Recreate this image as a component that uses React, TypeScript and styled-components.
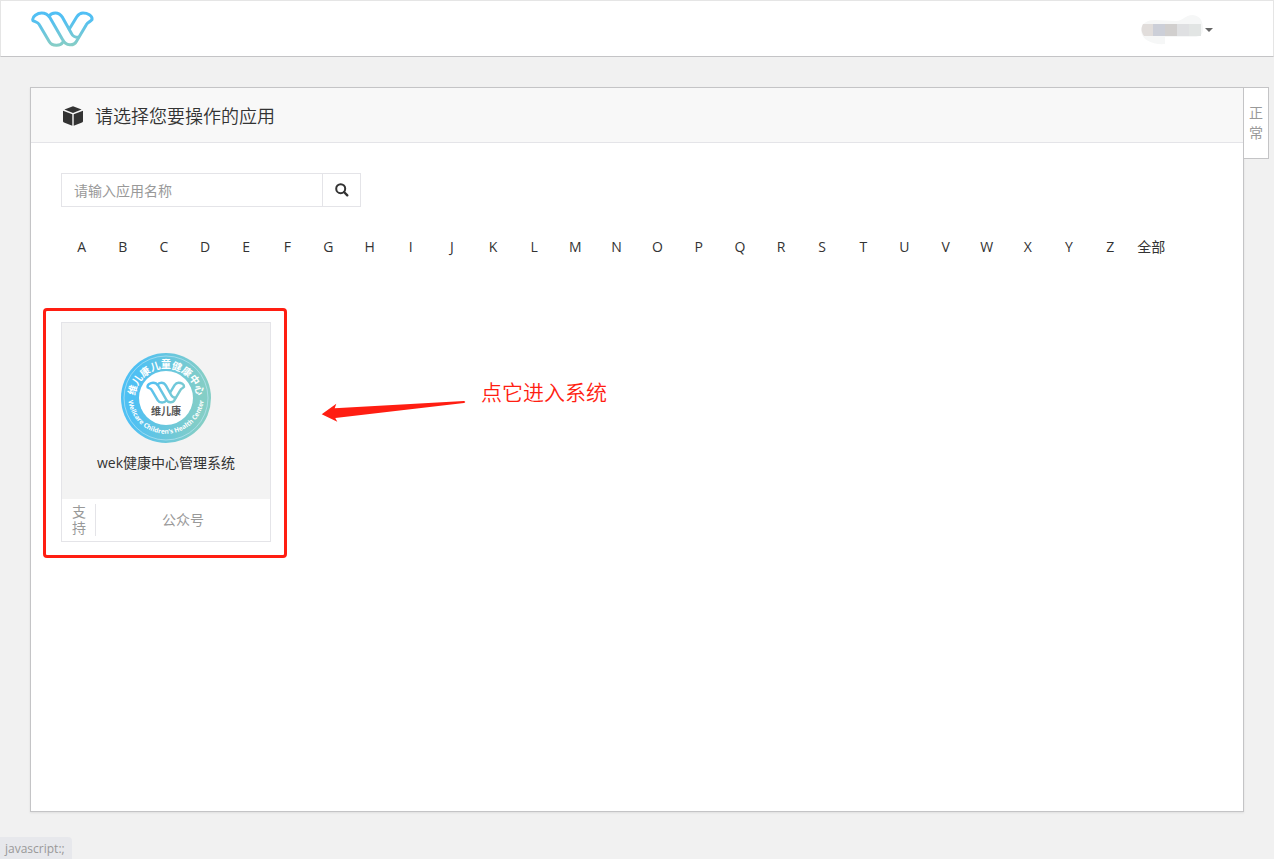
import React from "react";
import styled, { createGlobalStyle } from "styled-components";

const line = "#e4e4e8";
const edge = "#c4c4c6";
const ink = "#333";
const muted = "#999";
const alert = "#ff1e12";

const GlobalStyle = createGlobalStyle`
  *, *::before, *::after { box-sizing: border-box; }
  body {
    margin: 0;
    background: #f1f1f1;
    color: ${ink};
    font-family: "Open Sans", "Noto Sans CJK SC", sans-serif;
    font-size: 14px;
    line-height: 20px;
  }
  button, input { font: inherit; color: inherit; }
  a { color: inherit; text-decoration: none; }
`;

const Page = styled.div`
  display: flex;
  flex-direction: column;
  min-height: 100vh;
`;

const TopBar = styled.header`
  display: flex;
  align-items: center;
  justify-content: space-between;
  height: 57px;
  padding: 2px 60px 0 30px;
  background: #fff;
  border: 1px solid #e5e5e5;
  border-bottom-color: ${edge};
`;

const LogoLink = styled.a`
  display: flex;
`;

const UserButton = styled.button`
  display: flex;
  align-items: center;
  gap: 2px;
  padding: 0;
  border: 0;
  background: none;
  cursor: pointer;
`;

const Caret = styled.span`
  border: 4px solid transparent;
  border-top-color: #666;
  border-bottom: 0;
`;

const Main = styled.main`
  display: flex;
  flex: 1;
  align-items: stretch;
  padding: 30px 5px 47px 30px;
`;

const Panel = styled.section`
  flex: 1;
  min-width: 0;
  background: #fff;
  border: 1px solid ${edge};
  box-shadow: 0 1px 2px rgba(0, 0, 0, 0.08);
`;

const PanelHeader = styled.header`
  display: flex;
  align-items: center;
  gap: 12px;
  height: 55px;
  padding: 2px 32px 0;
  background: #f8f8f8;
  border-bottom: 1px solid ${line};
`;

const Title = styled.h1`
  margin: 0;
  font-size: 18px;
  line-height: 24px;
  font-weight: 350;
`;

const PanelBody = styled.div`
  padding: 30px;
`;

const StatusTab = styled.aside`
  position: relative;
  align-self: flex-start;
  width: 26px;
  margin-left: -1px;
  padding: 15px 5px;
  background: #fff;
  border: 1px solid ${edge};
  color: ${muted};
  word-break: break-all;
`;

const SearchForm = styled.form`
  display: flex;
  width: 300px;
  height: 34px;
  border: 1px solid ${line};
`;

const SearchInput = styled.input`
  flex: 1;
  min-width: 0;
  padding: 2px 12px 0;
  border: 0;
  outline: 0;
  background: none;
  &::placeholder { color: ${muted}; opacity: 1; }
`;

const SearchButton = styled.button`
  display: flex;
  align-items: center;
  justify-content: center;
  width: 38px;
  padding: 0;
  border: 0;
  border-left: 1px solid ${line};
  background: #fff;
  cursor: pointer;
`;

const LetterNav = styled.nav`
  display: grid;
  grid-template-columns: repeat(28, 1fr);
  margin-top: 30px;
  text-align: center;
  white-space: nowrap;
`;

const CardArea = styled.div`
  position: relative;
  width: 210px;
  margin-top: 65px;
`;

const AppCard = styled.a`
  display: block;
  border: 1px solid ${line};
`;

const CardFace = styled.div`
  display: flex;
  flex-direction: column;
  align-items: center;
  gap: 10px;
  height: 176px;
  padding-top: 30px;
  background: #f3f3f3;
`;

const CardFooter = styled.div`
  display: flex;
  align-items: center;
  height: 42px;
  background: #fff;
  color: ${muted};
`;

const SupportLabel = styled.span`
  width: 34px;
  padding: 0 10px;
  border-right: 1px solid ${line};
  line-height: 16px;
  word-break: break-all;
`;

const Channel = styled.span`
  flex: 1;
  text-align: center;
`;

const Highlight = styled.div`
  position: absolute;
  inset: -14px -16px -16px -18px;
  border: 3px solid ${alert};
  border-radius: 4px;
  pointer-events: none;
`;

const Callout = styled.div`
  position: absolute;
  top: 56px;
  left: 260px;
  display: flex;
  align-items: flex-start;
  gap: 15px;
  color: ${alert};
  font-size: 21px;
  line-height: 28px;
  font-weight: 350;
  white-space: nowrap;
`;

const LinkStatus = styled.div`
  position: fixed;
  left: 0;
  bottom: 0;
  height: 22px;
  padding: 2px 7px 0 5px;
  border-radius: 0 4px 0 0;
  background: #e7e8ec;
  color: ${muted};
  font-size: 12px;
`;

const Ribbon = ({ stroke, weight }: { stroke: string; weight: number }) => (
  <g fill="none" stroke={stroke} strokeWidth={weight} strokeLinejoin="round" strokeLinecap="round">
    <path d="M187 128 C181 140 155 140 147 126 L117 75 C113 67 105 67 98 63 C93 50 113 40 124 40 C136 40 143 45 149 54 L187 120 C196 140 221 140 229 124 L258 75 C262 67 270 67 275 60 C277 47 261 40 248 40 C238 40 233 46 229 52 L207 88" />
    <path d="M146 50 C150 43 157 40 165 40 C176 40 182 46 187 54 L213 101 C217 109 224 113 233 113" />
  </g>
);

const Logo = () => (
  <svg width="63" height="37" viewBox="92 34 189 111" role="img" aria-label="维儿康">
    <defs>
      <linearGradient id="logoTone" gradientUnits="userSpaceOnUse" x1="0" y1="38" x2="0" y2="140">
        <stop offset="0" stopColor="#50bff5" />
        <stop offset="0.25" stopColor="#54c0f0" />
        <stop offset="1" stopColor="#88cec5" />
      </linearGradient>
    </defs>
    <Ribbon stroke="url(#logoTone)" weight={9} />
  </svg>
);

const UserName = () => (
  <svg width="62" height="30" viewBox="0 0 62 30" aria-hidden="true">
    <path d="M0 15 C0 8 7 5 14 5 L35 6 C43 6 43 0 52 0 C61 1 62 9 62 14 C62 19 60 21 55 22 L24 22 L24 29 C12 30 0 25 0 15Z" fill="#f6f7f7" />
    <path d="M2 9 H12 V21 H3 C0 17 0 13 2 9Z" fill="#e1dddb" />
    <path d="M12 9 H24 V21 H12Z" fill="#cccfd8" />
    <path d="M24 9 H36 V21 H24Z" fill="#d1cfce" />
    <path d="M36 9 H48 V21 H36Z" fill="#dfe0e2" />
    <path d="M48 9 H60 V21 H48Z" fill="#e2e5e4" />
  </svg>
);

const Cube = () => (
  <svg width="20" height="20" viewBox="0 0 20 20" fill={ink} aria-hidden="true">
    <path d="M10 0.300 L18.600 3.600 L10 6.900 L1.400 3.600Z" />
    <path d="M0 4.700 L9.300 8.200 V19.700 L1 16.500 Q0 16.100 0 15.200Z" />
    <path d="M20 4.700 L10.700 8.200 V19.700 L19 16.500 Q20 16.100 20 15.200Z" />
  </svg>
);

const Magnifier = () => (
  <svg width="14" height="14" viewBox="0 0 14 14" fill="none" stroke={ink} aria-hidden="true">
    <circle cx="5.700" cy="5.700" r="4.500" strokeWidth="2" />
    <path d="M9 9 L12.300 12.300" strokeWidth="2.400" strokeLinecap="round" />
  </svg>
);

const Badge = () => (
  <svg width="90" height="90" viewBox="0 0 90 90" role="img" aria-label="维儿康儿童健康中心">
    <defs>
      <linearGradient id="badgeTone" x1="0" y1="0.450" x2="1" y2="0.550">
        <stop offset="0.150" stopColor="#4fc0f3" />
        <stop offset="0.900" stopColor="#84cec6" />
      </linearGradient>
      <linearGradient id="markTone" gradientUnits="userSpaceOnUse" x1="95" y1="40" x2="275" y2="140">
        <stop offset="0" stopColor="#50bff5" />
        <stop offset="1" stopColor="#84cdc8" />
      </linearGradient>
      <path id="upperArc" d="M14.500 52 A31 31 0 1 1 75.500 52" />
      <path id="lowerArc" d="M7.300 38 A38 38 0 1 0 82.700 38" />
    </defs>
    <circle cx="45" cy="45" r="45" fill="url(#badgeTone)" />
    <circle cx="45" cy="45" r="42" fill="none" stroke="#b9e4f2" strokeWidth="0.700" />
    <circle cx="45" cy="45" r="27" fill="#fff" />
    <g transform="translate(25.500 28.500) scale(0.205) translate(-92 -34)">
      <Ribbon stroke="url(#markTone)" weight={12} />
    </g>
    <text x="45" y="62" textAnchor="middle" fontSize="10" fontWeight="700" fill="#555">维儿康</text>
    <text fontSize="10" fontWeight="700" fill="#fff" textAnchor="middle">
      <textPath href="#upperArc" startOffset="50%">维儿康儿童健康中心</textPath>
    </text>
    <text fontSize="6.500" fontWeight="700" fill="#fff" textAnchor="middle">
      <textPath href="#lowerArc" startOffset="50%">Wellcare Children’s Health Center</textPath>
    </text>
  </svg>
);

const Arrow = () => (
  <svg width="145" height="45" viewBox="0 0 145 45" fill={alert} aria-hidden="true">
    <path d="M0.700 36.300 L15.300 25.700 L13.700 30.300 L143 23 Q145.500 24 143 25 L14.300 40 L16.300 43.700Z" />
  </svg>
);

const letters = [..."ABCDEFGHIJKLMNOPQRSTUVWXYZ", "全部"];

export default function App() {
  return (
    <>
      <GlobalStyle />
      <Page>
        <TopBar>
          <LogoLink href="#home"><Logo /></LogoLink>
          <UserButton type="button" aria-label="用户菜单">
            <UserName />
            <Caret />
          </UserButton>
        </TopBar>
        <Main>
          <Panel>
            <PanelHeader>
              <Cube />
              <Title>请选择您要操作的应用</Title>
            </PanelHeader>
            <PanelBody>
              <SearchForm onSubmit={(e) => e.preventDefault()}>
                <SearchInput type="text" aria-label="应用名称" placeholder="请输入应用名称" />
                <SearchButton type="submit" aria-label="搜索"><Magnifier /></SearchButton>
              </SearchForm>
              <LetterNav>
                {letters.map((l) => <a key={l} href={`#${l}`}>{l}</a>)}
              </LetterNav>
              <CardArea>
                <AppCard href="#app">
                  <CardFace>
                    <Badge />
                    <span>wek健康中心管理系统</span>
                  </CardFace>
                  <CardFooter>
                    <SupportLabel>支持</SupportLabel>
                    <Channel>公众号</Channel>
                  </CardFooter>
                </AppCard>
                <Highlight />
                <Callout>
                  <Arrow />
                  <span>点它进入系统</span>
                </Callout>
              </CardArea>
            </PanelBody>
          </Panel>
          <StatusTab>正常</StatusTab>
        </Main>
      </Page>
      <LinkStatus>javascript:;</LinkStatus>
    </>
  );
}
